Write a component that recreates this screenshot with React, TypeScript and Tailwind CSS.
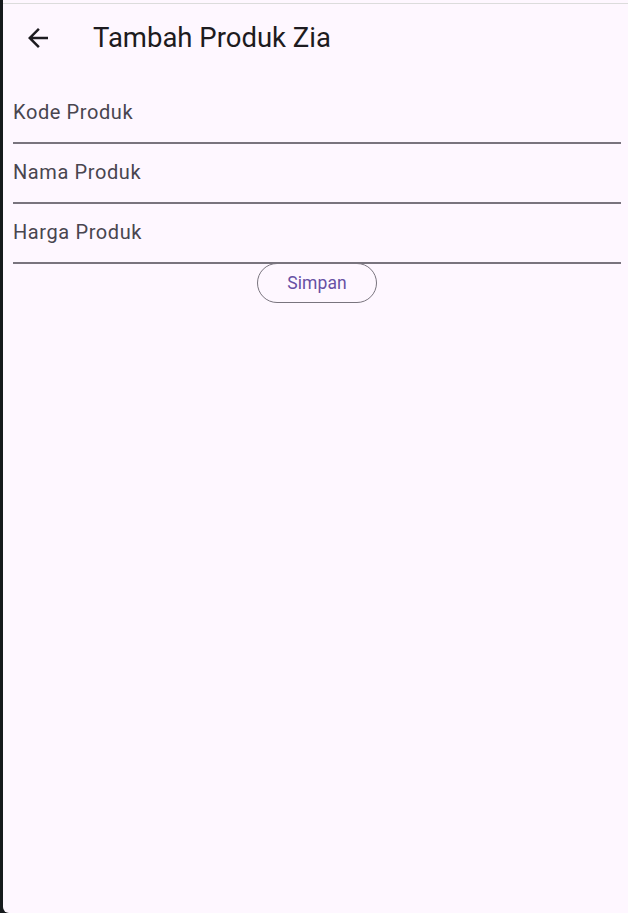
import React from 'react';

const fields = ['Kode Produk', 'Nama Produk', 'Harga Produk'];

export default function App() {
  return (
    <div className="flex h-[913px] w-[628px] bg-[#161a1d]" style={{ fontFamily: 'Roboto, "Noto Sans", sans-serif' }}>
      <div className="ml-[3px] flex flex-1 flex-col overflow-hidden rounded-bl-[6px] bg-[#fef7ff]">
        <div className="mt-[3px] h-px bg-[#dcdcdc]" />

        {/* App bar */}
        <div className="flex h-[68px] items-center">
          <div className="ml-[20px] flex h-[30px] w-[30px] items-center justify-center">
            <svg width="30" height="30" viewBox="0 0 24 24">
              <path d="M20 11H7.83l5.59-5.59L12 4l-8 8 8 8 1.41-1.41L7.83 13H20v-2z" fill="#1d1b20" />
            </svg>
          </div>
          <span className="ml-[40px] text-[27.5px] leading-8 text-[#1d1b20]">Tambah Produk Zia</span>
        </div>

        {/* Form */}
        <div className="mt-[12px] flex flex-col pl-[10px] pr-[7px]">
          {fields.map((label) => (
            <div key={label} className="flex h-[60px] items-center border-b-2 border-[#79747e] pb-[3px]">
              <span className="text-[20px] tracking-[0.6px] text-[#49454f]">{label}</span>
            </div>
          ))}
          <div className="-mt-px flex justify-center">
            <button className="h-10 w-[120px] rounded-full border border-[#79747e] text-[17.5px] tracking-[0.1px] text-[#6750a4]">
              Simpan
            </button>
          </div>
        </div>
      </div>
    </div>
  );
}
